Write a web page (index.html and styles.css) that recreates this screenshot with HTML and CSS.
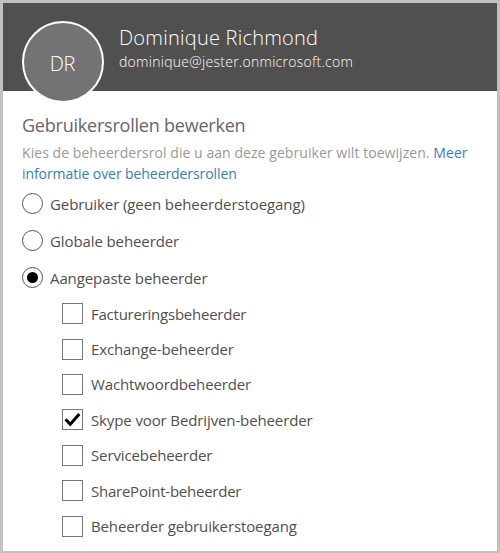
FILE: index.html
```html
<!DOCTYPE html>
<html lang="nl">
<head>
<meta charset="utf-8">
<title>Gebruikersrollen bewerken</title>
<link rel="stylesheet" href="styles.css">
</head>
<body>
<main class="panel">
  <header class="header">
    <div class="avatar"><span>DR</span></div>
    <div class="identity">
      <div class="name">Dominique Richmond</div>
      <div class="email">dominique@jester.onmicrosoft.com</div>
    </div>
  </header>
  <section class="content">
    <h1 class="title"><span>Gebruikersrollen bewerken</span></h1>
    <p class="intro"><span class="lead">Kies de beheerdersrol die u aan deze gebruiker wilt toewijzen. <a class="link">Meer</a></span><br><a class="link more">informatie over beheerdersrollen</a></p>
    <div class="roles">
      <div class="role"><i class="radio"></i><span>Gebruiker (geen beheerderstoegang)</span></div>
      <div class="role"><i class="radio"></i><span>Globale beheerder</span></div>
      <div class="role"><i class="radio selected"></i><span>Aangepaste beheerder</span></div>
    </div>
    <div class="options">
      <div class="option tight"><i class="box"></i><span>Factureringsbeheerder</span></div>
      <div class="option"><i class="box"></i><span>Exchange-beheerder</span></div>
      <div class="option"><i class="box"></i><span>Wachtwoordbeheerder</span></div>
      <div class="option"><i class="box"><svg class="check" viewBox="0 0 19 19"><path d="M2.5 9.2 7.3 14.3 16.3 4"/></svg></i><span>Skype voor Bedrijven-beheerder</span></div>
      <div class="option"><i class="box"></i><span>Servicebeheerder</span></div>
      <div class="option tight"><i class="box"></i><span>SharePoint-beheerder</span></div>
      <div class="option"><i class="box"></i><span>Beheerder gebruikerstoegang</span></div>
    </div>
  </section>
</main>
</body>
</html>
```
FILE: styles.css
```css
* { box-sizing: border-box; }
body { margin: 0; font-family: "Open Sans", "Noto Sans", sans-serif; font-size: 15px; color: #505050; }
.panel { width: 500px; height: 553px; background: #fff; border: solid #c1c1c1; border-width: 3px 3px 2px; overflow: hidden; }
.header { height: 88px; display: flex; background: #505050; color: #fff; }
.avatar { width: 82px; height: 82px; margin: 18px 0 0 19px; flex: none; border: 2px solid #fff; border-radius: 50%; background: #737373; display: flex; align-items: center; justify-content: center; padding: 2px 1px 0 0; font-size: 20px; font-weight: 300; letter-spacing: -.3px; }
.identity { margin: 21px 0 0 15px; white-space: nowrap; }
.name { font-size: 20px; line-height: 28px; font-weight: 300; letter-spacing: .23px; }
.email { font-size: 14px; line-height: 20px; font-weight: 300; letter-spacing: .28px; }
.content { padding: 20px 0 0 19px; white-space: nowrap; }
.title { margin: 0; font-size: 18px; line-height: 28px; font-weight: 400; letter-spacing: -.22px; color: #666; }
.intro { margin: 3px 0 0; font-size: 14px; line-height: 21px; color: #999; }
.lead { letter-spacing: .06px; }
.link { color: #377dbc; }
.more { letter-spacing: -.08px; }
.roles { margin-top: 1px; }
.role { height: 37px; display: flex; align-items: center; gap: 7px; letter-spacing: -.1px; }
.radio { width: 21px; height: 21px; border: 1px solid #555; border-radius: 50%; flex: none; display: grid; place-items: center; }
.selected::after { content: ""; width: 11px; height: 11px; border-radius: 50%; background: #000; }
.options { padding-left: 40px; }
.option { height: 35.4px; display: flex; align-items: center; gap: 8px; letter-spacing: -.12px; }
.tight { letter-spacing: -.24px; }
.box { width: 21px; height: 21px; border: 1px solid #777; flex: none; }
.check { display: block; width: 19px; height: 19px; fill: none; stroke: #000; stroke-width: 3; }
```
